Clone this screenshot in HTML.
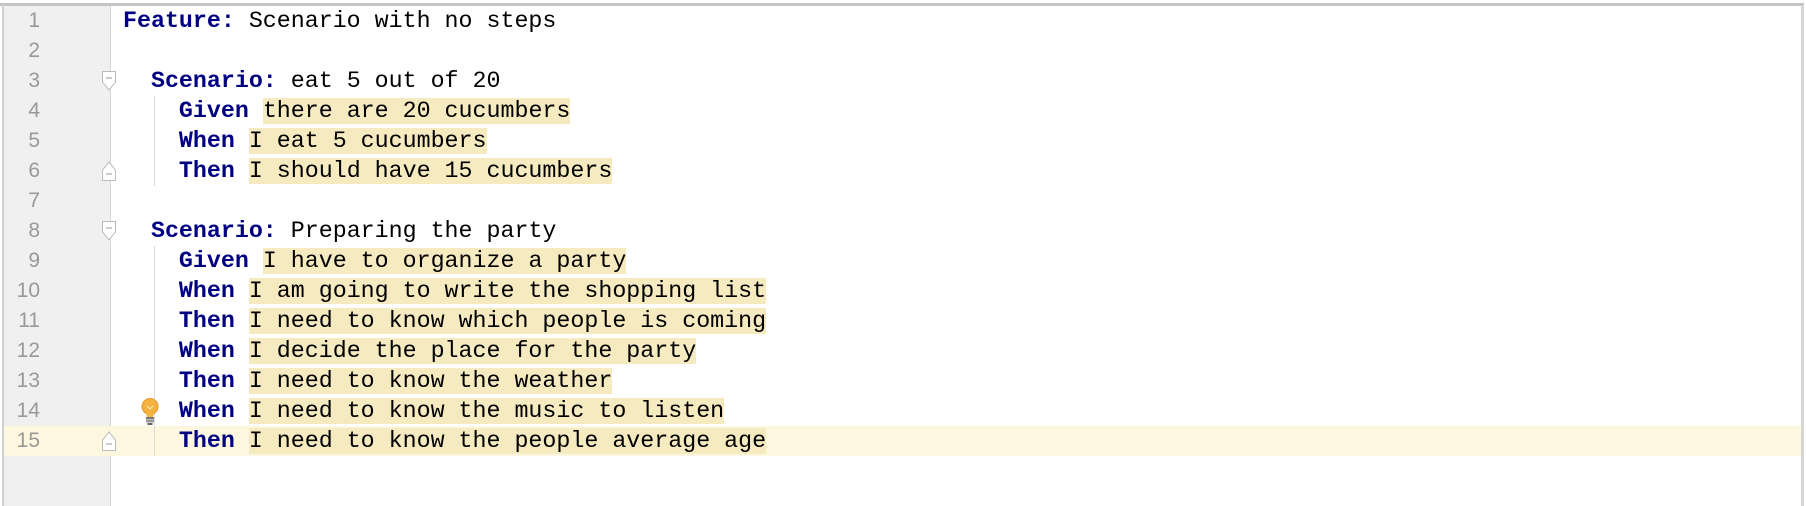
<!DOCTYPE html>
<html><head><style>
html,body{margin:0;padding:0;background:#fff;width:1806px;height:506px;overflow:hidden;position:relative}
#top{position:absolute;left:0;top:3px;width:1804px;height:3px;background:#c4c4c4}
#rb{position:absolute;left:1801px;top:5px;width:3px;height:501px;background:#d6d6d6}
#lb{position:absolute;left:2px;top:5px;width:2px;height:501px;background:#d0d0d0}
#gut{position:absolute;left:4px;top:6px;width:106px;height:500px;background:#f0f0f0;border-right:1px solid #d5d5d5}
.row{position:absolute;left:4px;height:30px;width:1797px;font:23.3px/30px "Liberation Mono",monospace;white-space:pre}
.cur{background:#fdf7df}
.num{position:absolute;left:0;width:36px;text-align:right;color:#999;font-family:"Liberation Sans",sans-serif;font-size:21px}
.code{position:absolute;left:119px;color:#000}
.k{color:#000080;font-weight:bold}
.h{background:#f5eac0}
.guide{position:absolute;left:154px;width:1px;background:#ddd}
</style></head><body>
<div id="top"></div><div id="gut"></div><div id="lb"></div><div id="rb"></div>
<div class="row cur" style="top:426px"></div>
<div style="position:absolute;left:4px;top:426px;width:106px;height:30px;background:#fdf7df"></div>
<div class="guide" style="top:96px;height:90px"></div>
<div class="guide" style="top:246px;height:210px"></div>

<div class="row" style="top:6px"><span class="num">1</span><span class="code"><span class="k">Feature:</span> Scenario with no steps</span></div>
<div class="row" style="top:36px"><span class="num">2</span></div>
<div class="row" style="top:66px"><span class="num">3</span><span class="code">  <span class="k">Scenario:</span> eat 5 out of 20</span></div>
<div class="row" style="top:96px"><span class="num">4</span><span class="code">    <span class="k">Given</span> <span class="h">there are 20 cucumbers</span></span></div>
<div class="row" style="top:126px"><span class="num">5</span><span class="code">    <span class="k">When</span> <span class="h">I eat 5 cucumbers</span></span></div>
<div class="row" style="top:156px"><span class="num">6</span><span class="code">    <span class="k">Then</span> <span class="h">I should have 15 cucumbers</span></span></div>
<div class="row" style="top:186px"><span class="num">7</span></div>
<div class="row" style="top:216px"><span class="num">8</span><span class="code">  <span class="k">Scenario:</span> Preparing the party</span></div>
<div class="row" style="top:246px"><span class="num">9</span><span class="code">    <span class="k">Given</span> <span class="h">I have to organize a party</span></span></div>
<div class="row" style="top:276px"><span class="num">10</span><span class="code">    <span class="k">When</span> <span class="h">I am going to write the shopping list</span></span></div>
<div class="row" style="top:306px"><span class="num">11</span><span class="code">    <span class="k">Then</span> <span class="h">I need to know which people is coming</span></span></div>
<div class="row" style="top:336px"><span class="num">12</span><span class="code">    <span class="k">When</span> <span class="h">I decide the place for the party</span></span></div>
<div class="row" style="top:366px"><span class="num">13</span><span class="code">    <span class="k">Then</span> <span class="h">I need to know the weather</span></span></div>
<div class="row" style="top:396px"><span class="num">14</span><span class="code">    <span class="k">When</span> <span class="h">I need to know the music to listen</span></span></div>
<div class="row" style="top:426px"><span class="num">15</span><span class="code">    <span class="k">Then</span> <span class="h">I need to know the people average age</span></span></div>

<svg style="position:absolute;left:101px;top:70px" width="16" height="22"><path d="M1.5 1.5H14.5V12L8 20L1.5 12Z" fill="#fff" stroke="#bbb"/><path d="M5 8H11" stroke="#999"/></svg>
<svg style="position:absolute;left:101px;top:160px" width="16" height="22"><path d="M1.5 20.5H14.5V10L8 2L1.5 10Z" fill="#fff" stroke="#bbb"/><path d="M5 14H11" stroke="#999"/></svg>
<svg style="position:absolute;left:101px;top:220px" width="16" height="22"><path d="M1.5 1.5H14.5V12L8 20L1.5 12Z" fill="#fff" stroke="#bbb"/><path d="M5 8H11" stroke="#999"/></svg>
<svg style="position:absolute;left:101px;top:430px" width="16" height="22"><path d="M1.5 20.5H14.5V10L8 2L1.5 10Z" fill="#fff" stroke="#bbb"/><path d="M5 14H11" stroke="#999"/></svg>
<svg style="position:absolute;left:140px;top:398px" width="20" height="28"><ellipse cx="10" cy="8.5" rx="8" ry="8" fill="#f5b240" stroke="#e49a2a"/><path d="M6 14L7 19H13L14 14Z" fill="#f5b240"/><path d="M7 8L10 11L13 8" stroke="#fff2c8" fill="none"/><rect x="6" y="19" width="8" height="2.5" fill="#777"/><rect x="6" y="22" width="8" height="2.5" fill="#999"/><rect x="7.5" y="25" width="5" height="2" fill="#666"/></svg>
</body></html>
